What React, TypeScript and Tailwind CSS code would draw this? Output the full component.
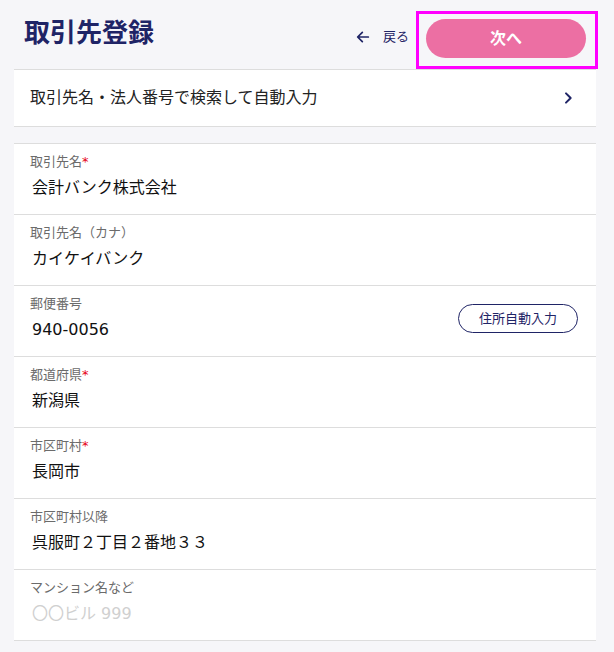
import React from 'react'

const fields = [
  { label: '取引先名', value: '会計バンク株式会社', required: true },
  { label: '取引先名（カナ）', value: 'カイケイバンク' },
  { label: '郵便番号', value: '940-0056', action: '住所自動入力' },
  { label: '都道府県', value: '新潟県', required: true },
  { label: '市区町村', value: '長岡市', required: true },
  { label: '市区町村以降', value: '呉服町２丁目２番地３３' },
  { label: 'マンション名など', value: '〇〇ビル 999', placeholder: true },
]

const App = () => {
  return (
    <div
      className="w-[614px] h-[652px] overflow-hidden bg-[#f6f6f9]"
      style={{ fontFamily: '"DejaVu Sans", "Noto Sans CJK JP", sans-serif' }}
    >
      {/* Header */}
      <div className="flex items-start h-[69px] pl-6 pr-4 pt-[11px]">
        <h1
          className="text-[26px] leading-[40px] font-bold text-[#1f2466]"
          style={{ fontFamily: '"Noto Sans CJK JP", sans-serif' }}
        >
          取引先登録
        </h1>
        <div className="flex-1" />
        <button className="flex items-center gap-3 mt-[16px] mr-[7px] text-[#1f2466]">
          <svg className="w-4 h-4" viewBox="0 0 24 24" fill="none" stroke="currentColor" strokeWidth={2.6} strokeLinecap="round" strokeLinejoin="round">
            <path d="M20 12H5M11 5l-7 7 7 7" />
          </svg>
          <span className="text-[13px] leading-5">戻る</span>
        </button>
        <div className="border-[3px] border-[#ff00ff] w-[182px] h-[58px] pl-[7px] pt-[5px]">
          <button className="w-[160px] h-[39px] rounded-full bg-[#ec6fa3] text-white font-bold text-[16px]">
            次へ
          </button>
        </div>
      </div>

      {/* Search row */}
      <div className="mx-[14px] w-[582px] h-[58px] bg-white border-y border-[#dddddd] flex items-center justify-between pl-4 pr-[20px]">
        <span className="text-[16px] text-[#222]">取引先名・法人番号で検索して自動入力</span>
        <svg className="w-4 h-4 text-[#1f2466]" viewBox="0 0 24 24" fill="none" stroke="currentColor" strokeWidth={3} strokeLinecap="round" strokeLinejoin="round">
          <path d="M9 5l7 7-7 7" />
        </svg>
      </div>

      {/* Form */}
      <div className="mx-[14px] w-[582px] mt-4 bg-white border-t border-[#dddddd]">
        {fields.map((f, i) => (
          <div key={i} className="h-[71px] border-b border-[#dddddd] flex items-start justify-between pl-4 pr-[18px] pt-2">
            <div className="flex flex-col">
              <span className="text-[13px] leading-5 text-[#6b6b6b]">
                {f.label}
                {f.required && <span className="text-[#e60012]">*</span>}
              </span>
              <span className={`text-[16px] leading-6 mt-1 pl-[2px] ${f.placeholder ? 'text-[#d0d0d0]' : 'text-[#111]'}`}>
                {f.value}
              </span>
            </div>
            {f.action && (
              <button className="h-[29px] mt-[10px] px-5 rounded-full border border-[#1f2466] text-[13px] text-[#1f2466] bg-white">
                {f.action}
              </button>
            )}
          </div>
        ))}
      </div>
    </div>
  )
}

export default App
